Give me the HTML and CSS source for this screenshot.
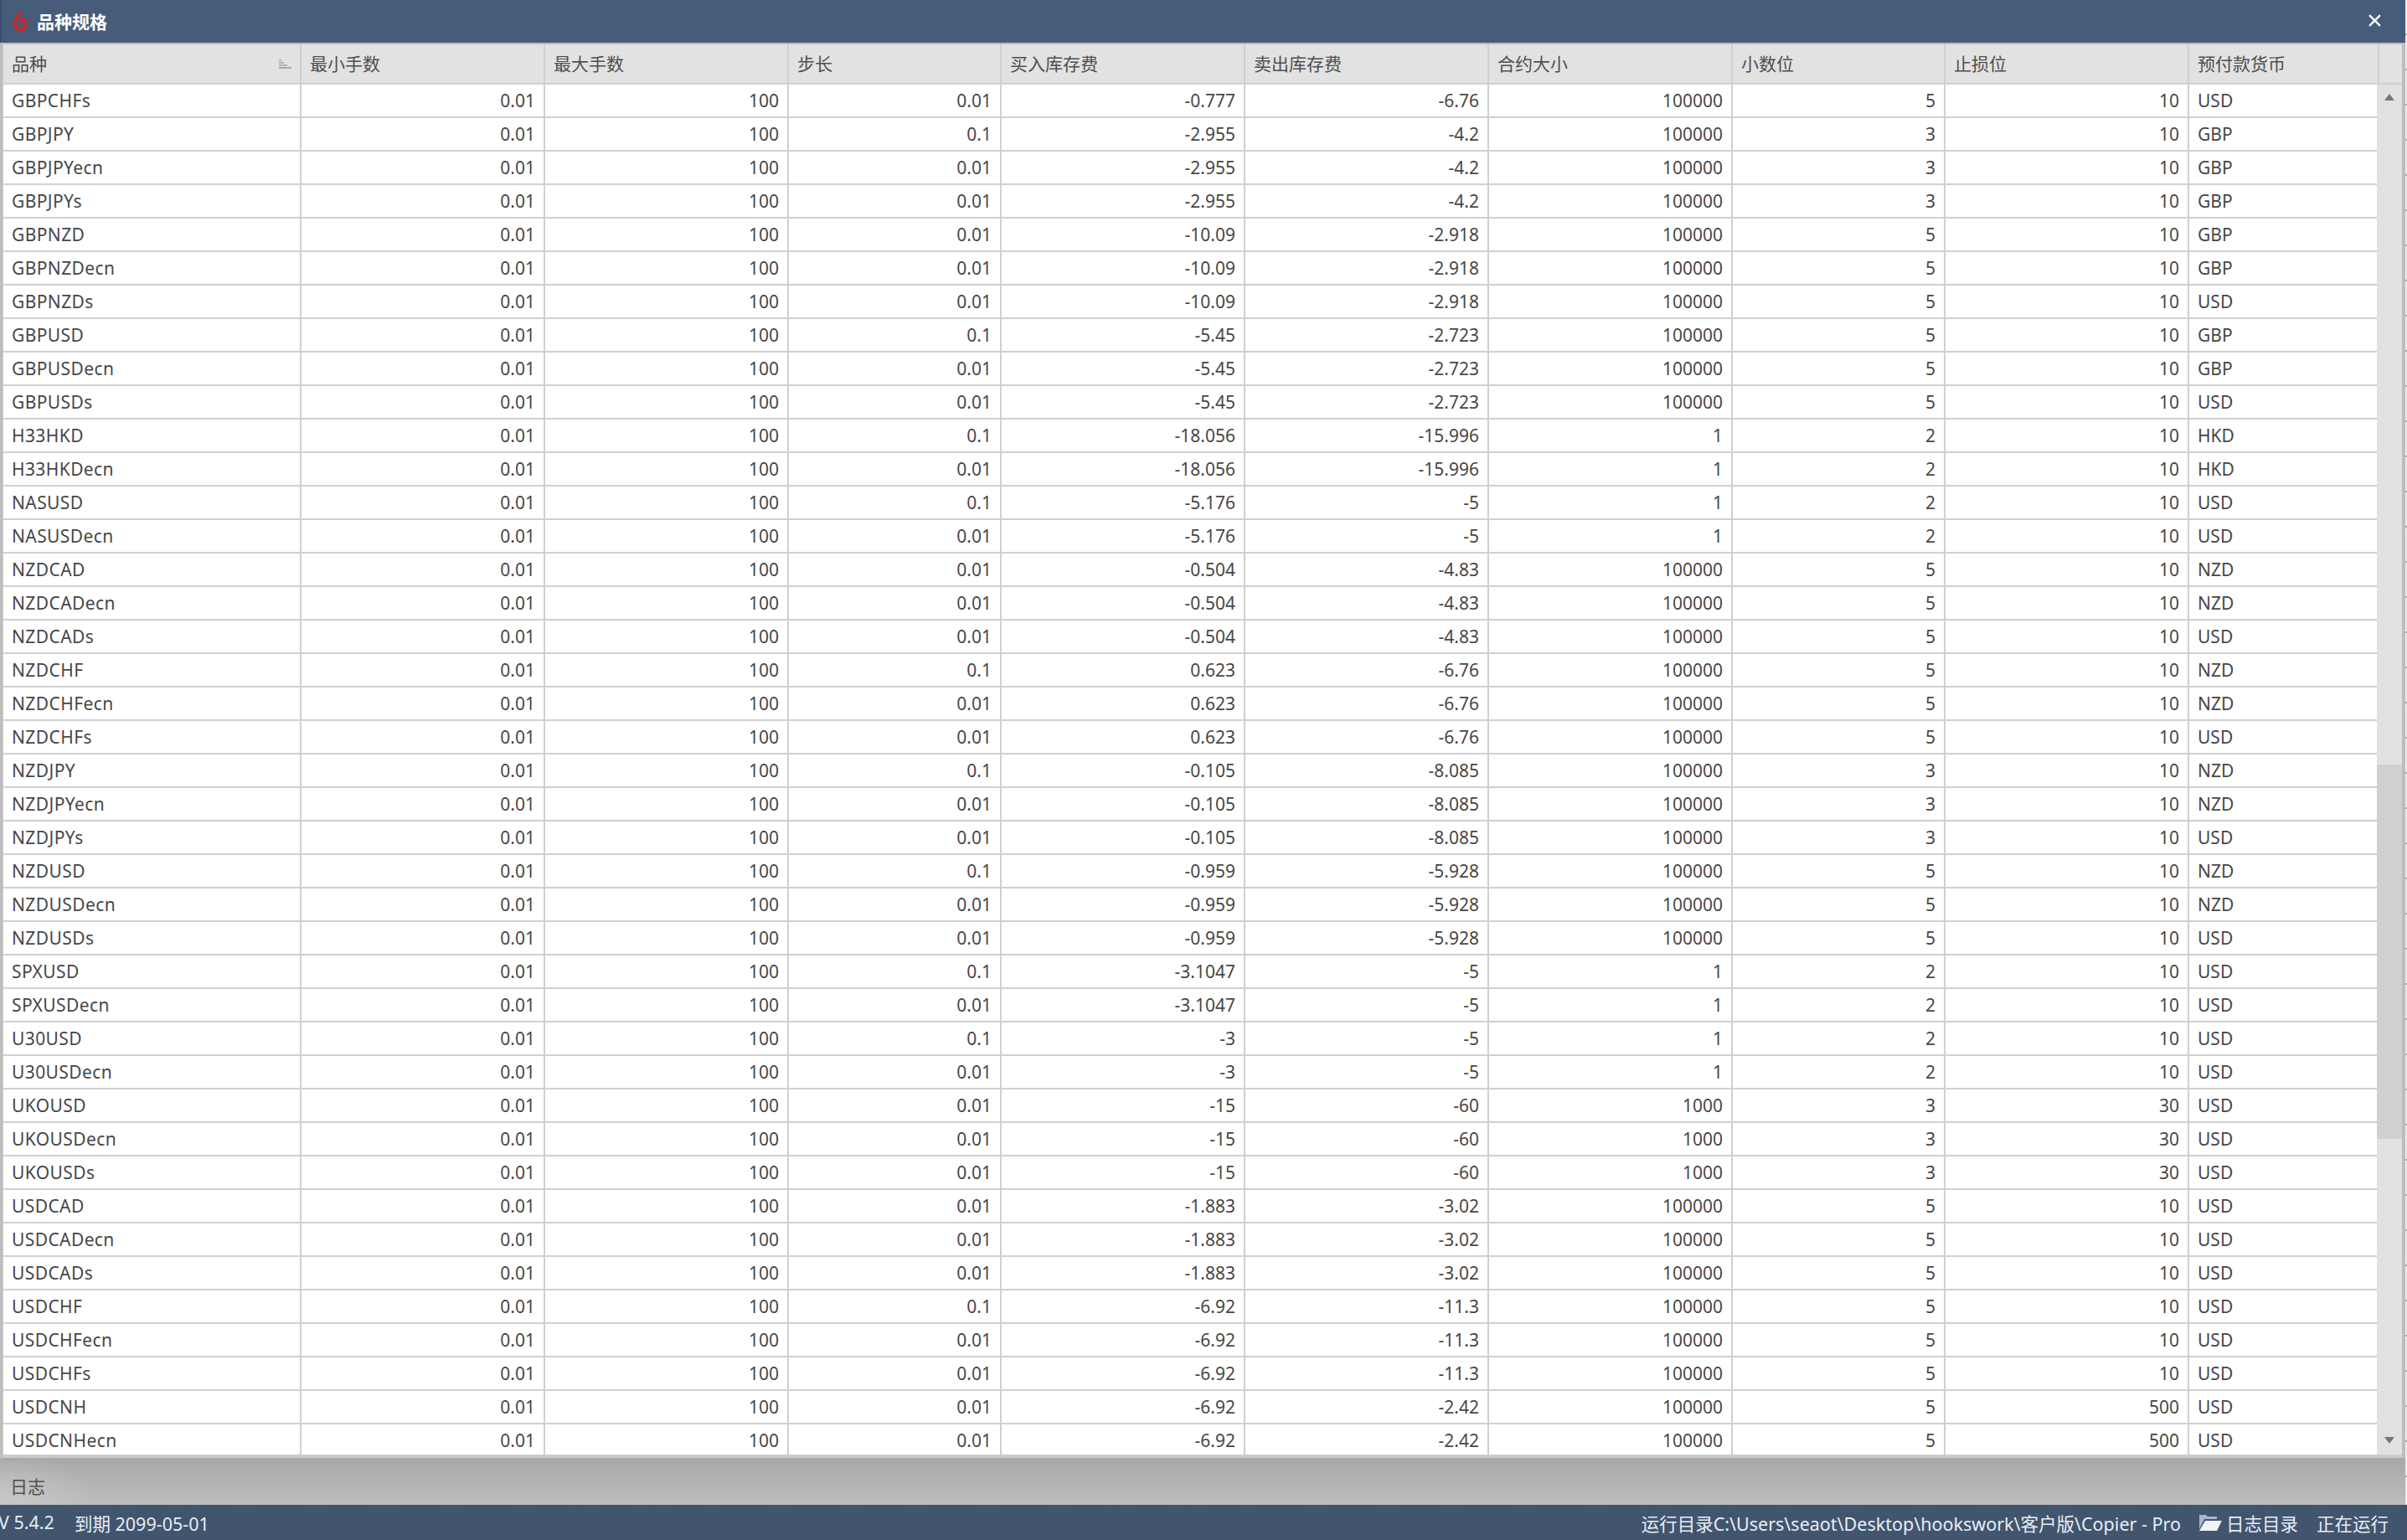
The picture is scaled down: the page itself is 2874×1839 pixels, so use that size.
FILE: index.html
```html
<!doctype html>
<html>
    <head>
        <title>品种规格</title>
        <meta charset="utf-8" />
        <link rel="stylesheet" href="styles.css">
    </head>
    <body>
        <div id="wrapper">
            <header class="titlebar">
                <svg class="logo" viewBox="0 0 20 28">
                    <path d="M10 2 C8 8 3 12 3 18.500 A7 7 0 0 0 17 18.500 C17 15.500 16 13 14 11" fill="none" stroke="#c8262b" stroke-width="4.400" />
                    <path d="M9 17 L10.500 9 L16 14 Z" fill="#c8262b" />
                </svg>
                <h1 class="ttl">品种规格</h1>
                <svg class="close" viewBox="0 0 14 14">
                    <path d="M1 1 L13 13 M13 1 L1 13" stroke="#fff" stroke-width="2.200" />
                </svg>
            </header>
            <section class="grid">
                <div class="gridhead">
                    <div class="hcell hcell-sorted">品种
                        <svg class="sorticon" viewBox="0 0 15 12">
                            <rect x="0" y="0" width="3" height="2" fill="#b5b5b5" />
                            <rect x="0" y="3" width="6" height="2" fill="#b5b5b5" />
                            <rect x="0" y="6" width="10" height="2" fill="#b5b5b5" />
                            <rect x="0" y="9" width="15" height="2" fill="#a8a8a8" />
                        </svg>
                    </div>
                    <div class="hcell">最小手数</div>
                    <div class="hcell">最大手数</div>
                    <div class="hcell">步长</div>
                    <div class="hcell">买入库存费</div>
                    <div class="hcell">卖出库存费</div>
                    <div class="hcell">合约大小</div>
                    <div class="hcell">小数位</div>
                    <div class="hcell">止损位</div>
                    <div class="hcell">预付款货币</div>
                    <div class="hcell hcell-end"></div>
                </div>
                <div class="gridbody">
                    <table class="rows">
                        <colgroup>
                            <col class="c-wide0" /><col class="c-wide" /><col class="c-wide" /><col class="c-narrow" /><col class="c-wide" />
                            <col class="c-wide" /><col class="c-wide" /><col class="c-narrow" /><col class="c-wide" /><col class="c-last" />
                        </colgroup>
                        <tbody>
                            <tr><td>GBPCHFs</td><td>0.01</td><td>100</td><td>0.01</td><td>-0.777</td><td>-6.76</td><td>100000</td><td>5</td><td>10</td><td>USD</td></tr>
                            <tr><td>GBPJPY</td><td>0.01</td><td>100</td><td>0.1</td><td>-2.955</td><td>-4.2</td><td>100000</td><td>3</td><td>10</td><td>GBP</td></tr>
                            <tr><td>GBPJPYecn</td><td>0.01</td><td>100</td><td>0.01</td><td>-2.955</td><td>-4.2</td><td>100000</td><td>3</td><td>10</td><td>GBP</td></tr>
                            <tr><td>GBPJPYs</td><td>0.01</td><td>100</td><td>0.01</td><td>-2.955</td><td>-4.2</td><td>100000</td><td>3</td><td>10</td><td>GBP</td></tr>
                            <tr><td>GBPNZD</td><td>0.01</td><td>100</td><td>0.01</td><td>-10.09</td><td>-2.918</td><td>100000</td><td>5</td><td>10</td><td>GBP</td></tr>
                            <tr><td>GBPNZDecn</td><td>0.01</td><td>100</td><td>0.01</td><td>-10.09</td><td>-2.918</td><td>100000</td><td>5</td><td>10</td><td>GBP</td></tr>
                            <tr><td>GBPNZDs</td><td>0.01</td><td>100</td><td>0.01</td><td>-10.09</td><td>-2.918</td><td>100000</td><td>5</td><td>10</td><td>USD</td></tr>
                            <tr><td>GBPUSD</td><td>0.01</td><td>100</td><td>0.1</td><td>-5.45</td><td>-2.723</td><td>100000</td><td>5</td><td>10</td><td>GBP</td></tr>
                            <tr><td>GBPUSDecn</td><td>0.01</td><td>100</td><td>0.01</td><td>-5.45</td><td>-2.723</td><td>100000</td><td>5</td><td>10</td><td>GBP</td></tr>
                            <tr><td>GBPUSDs</td><td>0.01</td><td>100</td><td>0.01</td><td>-5.45</td><td>-2.723</td><td>100000</td><td>5</td><td>10</td><td>USD</td></tr>
                            <tr><td>H33HKD</td><td>0.01</td><td>100</td><td>0.1</td><td>-18.056</td><td>-15.996</td><td>1</td><td>2</td><td>10</td><td>HKD</td></tr>
                            <tr><td>H33HKDecn</td><td>0.01</td><td>100</td><td>0.01</td><td>-18.056</td><td>-15.996</td><td>1</td><td>2</td><td>10</td><td>HKD</td></tr>
                            <tr><td>NASUSD</td><td>0.01</td><td>100</td><td>0.1</td><td>-5.176</td><td>-5</td><td>1</td><td>2</td><td>10</td><td>USD</td></tr>
                            <tr><td>NASUSDecn</td><td>0.01</td><td>100</td><td>0.01</td><td>-5.176</td><td>-5</td><td>1</td><td>2</td><td>10</td><td>USD</td></tr>
                            <tr><td>NZDCAD</td><td>0.01</td><td>100</td><td>0.01</td><td>-0.504</td><td>-4.83</td><td>100000</td><td>5</td><td>10</td><td>NZD</td></tr>
                            <tr><td>NZDCADecn</td><td>0.01</td><td>100</td><td>0.01</td><td>-0.504</td><td>-4.83</td><td>100000</td><td>5</td><td>10</td><td>NZD</td></tr>
                            <tr><td>NZDCADs</td><td>0.01</td><td>100</td><td>0.01</td><td>-0.504</td><td>-4.83</td><td>100000</td><td>5</td><td>10</td><td>USD</td></tr>
                            <tr><td>NZDCHF</td><td>0.01</td><td>100</td><td>0.1</td><td>0.623</td><td>-6.76</td><td>100000</td><td>5</td><td>10</td><td>NZD</td></tr>
                            <tr><td>NZDCHFecn</td><td>0.01</td><td>100</td><td>0.01</td><td>0.623</td><td>-6.76</td><td>100000</td><td>5</td><td>10</td><td>NZD</td></tr>
                            <tr><td>NZDCHFs</td><td>0.01</td><td>100</td><td>0.01</td><td>0.623</td><td>-6.76</td><td>100000</td><td>5</td><td>10</td><td>USD</td></tr>
                            <tr><td>NZDJPY</td><td>0.01</td><td>100</td><td>0.1</td><td>-0.105</td><td>-8.085</td><td>100000</td><td>3</td><td>10</td><td>NZD</td></tr>
                            <tr><td>NZDJPYecn</td><td>0.01</td><td>100</td><td>0.01</td><td>-0.105</td><td>-8.085</td><td>100000</td><td>3</td><td>10</td><td>NZD</td></tr>
                            <tr><td>NZDJPYs</td><td>0.01</td><td>100</td><td>0.01</td><td>-0.105</td><td>-8.085</td><td>100000</td><td>3</td><td>10</td><td>USD</td></tr>
                            <tr><td>NZDUSD</td><td>0.01</td><td>100</td><td>0.1</td><td>-0.959</td><td>-5.928</td><td>100000</td><td>5</td><td>10</td><td>NZD</td></tr>
                            <tr><td>NZDUSDecn</td><td>0.01</td><td>100</td><td>0.01</td><td>-0.959</td><td>-5.928</td><td>100000</td><td>5</td><td>10</td><td>NZD</td></tr>
                            <tr><td>NZDUSDs</td><td>0.01</td><td>100</td><td>0.01</td><td>-0.959</td><td>-5.928</td><td>100000</td><td>5</td><td>10</td><td>USD</td></tr>
                            <tr><td>SPXUSD</td><td>0.01</td><td>100</td><td>0.1</td><td>-3.1047</td><td>-5</td><td>1</td><td>2</td><td>10</td><td>USD</td></tr>
                            <tr><td>SPXUSDecn</td><td>0.01</td><td>100</td><td>0.01</td><td>-3.1047</td><td>-5</td><td>1</td><td>2</td><td>10</td><td>USD</td></tr>
                            <tr><td>U30USD</td><td>0.01</td><td>100</td><td>0.1</td><td>-3</td><td>-5</td><td>1</td><td>2</td><td>10</td><td>USD</td></tr>
                            <tr><td>U30USDecn</td><td>0.01</td><td>100</td><td>0.01</td><td>-3</td><td>-5</td><td>1</td><td>2</td><td>10</td><td>USD</td></tr>
                            <tr><td>UKOUSD</td><td>0.01</td><td>100</td><td>0.01</td><td>-15</td><td>-60</td><td>1000</td><td>3</td><td>30</td><td>USD</td></tr>
                            <tr><td>UKOUSDecn</td><td>0.01</td><td>100</td><td>0.01</td><td>-15</td><td>-60</td><td>1000</td><td>3</td><td>30</td><td>USD</td></tr>
                            <tr><td>UKOUSDs</td><td>0.01</td><td>100</td><td>0.01</td><td>-15</td><td>-60</td><td>1000</td><td>3</td><td>30</td><td>USD</td></tr>
                            <tr><td>USDCAD</td><td>0.01</td><td>100</td><td>0.01</td><td>-1.883</td><td>-3.02</td><td>100000</td><td>5</td><td>10</td><td>USD</td></tr>
                            <tr><td>USDCADecn</td><td>0.01</td><td>100</td><td>0.01</td><td>-1.883</td><td>-3.02</td><td>100000</td><td>5</td><td>10</td><td>USD</td></tr>
                            <tr><td>USDCADs</td><td>0.01</td><td>100</td><td>0.01</td><td>-1.883</td><td>-3.02</td><td>100000</td><td>5</td><td>10</td><td>USD</td></tr>
                            <tr><td>USDCHF</td><td>0.01</td><td>100</td><td>0.1</td><td>-6.92</td><td>-11.3</td><td>100000</td><td>5</td><td>10</td><td>USD</td></tr>
                            <tr><td>USDCHFecn</td><td>0.01</td><td>100</td><td>0.01</td><td>-6.92</td><td>-11.3</td><td>100000</td><td>5</td><td>10</td><td>USD</td></tr>
                            <tr><td>USDCHFs</td><td>0.01</td><td>100</td><td>0.01</td><td>-6.92</td><td>-11.3</td><td>100000</td><td>5</td><td>10</td><td>USD</td></tr>
                            <tr><td>USDCNH</td><td>0.01</td><td>100</td><td>0.01</td><td>-6.92</td><td>-2.42</td><td>100000</td><td>5</td><td>500</td><td>USD</td></tr>
                            <tr><td>USDCNHecn</td><td>0.01</td><td>100</td><td>0.01</td><td>-6.92</td><td>-2.42</td><td>100000</td><td>5</td><td>500</td><td>USD</td></tr>
                        </tbody>
                    </table>
                    <div class="scrollbar">
                        <svg class="arrow arrow-up" viewBox="0 0 12 8"><path d="M6 0 L12 8 L0 8 Z" fill="#767676" /></svg>
                        <div class="thumb"></div>
                        <svg class="arrow arrow-down" viewBox="0 0 12 8"><path d="M0 0 L12 0 L6 8 Z" fill="#767676" /></svg>
                    </div>
                </div>
            </section>
            <section class="log">日志</section>
            <footer class="status">
                <div class="status-left">
                    <span class="version">V 5.4.2</span>
                    <span>到期 2099-05-01</span>
                </div>
                <div class="status-right">
                    <span>运行目录C:\Users\seaot\Desktop\hookswork\客户版\Copier - Pro</span>
                    <span class="logdir">
                        <svg class="folder" viewBox="0 0 27 20">
                            <path d="M0 1 L8 1 L10 3 L21 3 L21 6 L6 6 L0 18 Z" fill="#aab6c6" />
                            <path d="M7 8 L27 8 L21 20 L0 20 Z" fill="#f1f3f6" />
                        </svg>
                        日志目录
                    </span>
                    <span>正在运行</span>
                </div>
            </footer>
        </div>
    </body>
</html>
```
FILE: styles.css
```css
html {
    height: 100%;
    box-sizing: border-box;
    margin: 0px;
    padding: 0px;
}

body {
    font-family: "Noto Sans", "Noto Sans CJK SC", sans-serif;
    height: 100%;
    margin: 0px;
    padding: 0px;
    overflow: hidden;
    color: #4f4f4f;
    background-color: #ececec;
    background-image: repeating-linear-gradient(180deg, #ececec 0px, #ececec 40px, #a9a9a9 40px, #a9a9a9 42px);
}

#wrapper {
    width: 2872px;
    height: 1839px;
    display: flex;
    flex-direction: column;
}

.titlebar {
    height: 51px;
    box-sizing: border-box;
    flex: none;
    display: flex;
    align-items: center;
    background-color: #475c7a;
    border-left: 2px solid #3d4f69;
    padding-left: 13px;
    padding-right: 29px;
    padding-bottom: 2px;
}

.logo {
    width: 18px;
    height: 26px;
    margin-right: 11px;
}

.ttl {
    margin: 0px;
    flex: 1;
    font-size: 21px;
    font-weight: bold;
    color: #fff;
    font-family: "Noto Sans CJK SC", sans-serif;
}

.close {
    width: 15px;
    height: 15px;
}

.grid {
    flex: none;
    height: 1692px;
    box-sizing: border-box;
    border-top: 2px solid #bdbdbd;
    border-left: 3px solid #bdbdbd;
    border-right: 4px solid #bdbdbd;
    border-bottom: 2px solid #a8a8a8;
    padding-left: 1px;
    padding-bottom: 4px;
    background-color: #cbcbcb;
}

.gridhead {
    height: 48px;
    box-sizing: border-box;
    display: grid;
    grid-template-columns: 356px 291px 291px 254px 291px 291px 291px 254px 291px 227px 1fr;
    background-color: #e2e2e2;
    border-bottom: 2px solid #d0d0d0;
}

.hcell {
    font-family: "Noto Sans CJK SC", sans-serif;
    font-size: 21px;
    line-height: 44px;
    padding-left: 10px;
    padding-bottom: 2px;
    border-right: 2px solid #d0d0d0;
    display: flex;
    justify-content: space-between;
    align-items: center;
}

.hcell-end {
    border-right: none;
}

.sorticon {
    width: 15px;
    height: 12px;
    margin-right: 10px;
    margin-top: 3px;
}

.gridbody {
    height: 1636px;
    display: flex;
    overflow: hidden;
}

.rows {
    width: 2834px;
    flex: none;
    table-layout: fixed;
    border-collapse: separate;
    border-spacing: 0px;
    background-color: #fff;
    align-self: flex-start;
}

.c-wide0 { width: 356px; }
.c-wide { width: 291px; }
.c-narrow { width: 254px; }
.c-last { width: 224px; }

.rows td {
    height: 38px;
    padding: 0px 10px 0px 0px;
    font-size: 21px;
    line-height: 36px;
    text-align: right;
    white-space: nowrap;
    color: #474747;
    border-right: 2px solid #d0d0d0;
    border-bottom: 2px solid #d0d0d0;
}

.rows td:first-child {
    text-align: left;
    padding: 0px 0px 0px 10px;
    letter-spacing: 0.400px;
}

.rows td:last-child {
    text-align: left;
    padding: 0px 0px 0px 10px;
    border-right: none;
}

.scrollbar {
    flex: 1;
    display: flex;
    flex-direction: column;
    align-items: center;
    background-color: #e1e1e1;
    position: relative;
}

.arrow {
    width: 12px;
    height: 8px;
    position: absolute;
}

.arrow-up {
    top: 11px;
}

.arrow-down {
    bottom: 13px;
}

.thumb {
    width: 100%;
    height: 447px;
    margin-top: 812px;
    background-color: #d0d0d0;
}

.log {
    flex: none;
    height: 54px;
    box-sizing: border-box;
    padding: 16px 0px 0px 12px;
    font-family: "Noto Sans CJK SC", sans-serif;
    font-size: 21px;
    background: radial-gradient(120px 60px at 0px 100%, #c8c8c8, transparent), linear-gradient(180deg, #a9a9a9, #bdbdbd);
}

.status {
    flex: none;
    height: 42px;
    display: flex;
    justify-content: space-between;
    align-items: center;
    background-color: #41556f;
    color: #e8edf3;
    font-size: 21.500px;
    margin-right: -2px;
    overflow: hidden;
}

.status-left {
    display: flex;
    gap: 24px;
    margin-left: -2px;
}

.status-right {
    display: flex;
    align-items: center;
    gap: 22px;
    padding-right: 22px;
}

.logdir {
    display: flex;
    align-items: center;
    gap: 5px;
}

.folder {
    width: 27px;
    height: 20px;
}
```
